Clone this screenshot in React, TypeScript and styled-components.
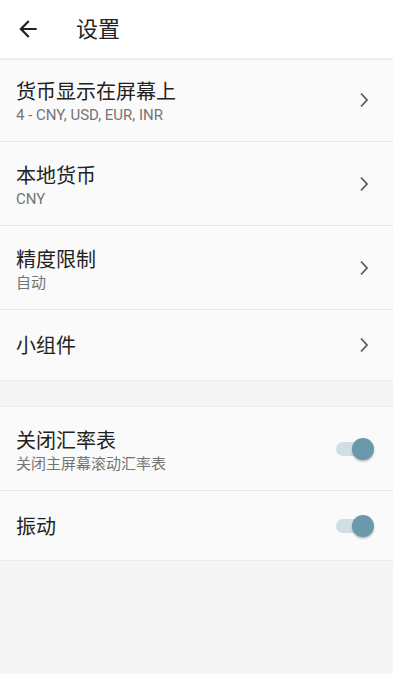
import React from "react";
import styled, { createGlobalStyle } from "styled-components";

const Global = createGlobalStyle`
  html, body { margin: 0; padding: 0; background: #f5f5f5; }
  body { font-family: Roboto, "Noto Sans CJK SC", "Noto Sans", sans-serif; }
  * { box-sizing: border-box; }
`;

const Page = styled.div`
  width: 393px;
  min-height: 674px;
  background: #f5f5f5;
  display: flex;
  flex-direction: column;
`;

const Header = styled.header`
  height: 58px;
  background: #ffffff;
  display: flex;
  align-items: center;
  padding-left: 15px;
  gap: 35px;
  position: relative;
  z-index: 1;
  box-shadow: 0 1px 3px rgba(0, 0, 0, 0.1);
`;

const Title = styled.h1`
  margin: 0 0 5px 0;
  font-size: 22px;
  font-weight: 400;
  color: #222;
  font-family: "Noto Sans CJK SC", sans-serif;
  line-height: 1;
`;

const Section = styled.section`
  background: #fafafa;
  display: flex;
  flex-direction: column;
  border-bottom: 1px solid #ececec;
`;

const Gap = styled.div`
  height: 26px;
  background: #f4f4f4;
  border-bottom: 1px solid #ebebeb;
`;

const Row = styled.div<{ $h: number; $last?: boolean }>`
  height: ${(p) => p.$h}px;
  display: flex;
  align-items: center;
  padding: 0 16px 0 16px;
  border-bottom: ${(p) => (p.$last ? "none" : "1px solid #e8e8e8")};
`;

const Texts = styled.div<{ $two?: boolean }>`
  flex: 1;
  display: flex;
  flex-direction: column;
  padding-top: ${(p) => (p.$two ? 3 : 0)}px;
`;

const RowTitle = styled.div`
  font-size: 20px;
  line-height: 28px;
  color: #222;
  font-family: "Noto Sans CJK SC", sans-serif;
`;

const RowSub = styled.div`
  font-size: 15px;
  line-height: 20px;
  color: #757575;
  font-family: Roboto, "Noto Sans CJK SC", sans-serif;
`;

const Chevron = styled.svg`
  width: 10px;
  height: 16px;
  margin-right: 8px;
`;

const Switch = styled.div`
  position: relative;
  width: 38px;
  height: 22px;
  margin-right: 3px;
`;

const Track = styled.div`
  position: absolute;
  left: 0;
  top: 4px;
  width: 34px;
  height: 14px;
  border-radius: 7px;
  background: #cfdfe4;
`;

const Knob = styled.div`
  position: absolute;
  right: 0;
  top: 0;
  width: 22px;
  height: 22px;
  border-radius: 50%;
  background: #6999aa;
  box-shadow: 0 1.5px 2px rgba(0, 0, 0, 0.28);
`;

const ChevronIcon = () => (
  <Chevron viewBox="0 0 10 16">
    <path d="M2 1.5 L8 8 L2 14.5" fill="none" stroke="#555" strokeWidth="1.7" />
  </Chevron>
);

const Toggle = () => (
  <Switch>
    <Track />
    <Knob />
  </Switch>
);

const BackIcon = () => (
  <svg width="26" height="26" viewBox="0 0 24 24">
    <path d="M20 11H7.83l5.59-5.59L12 4l-8 8 8 8 1.41-1.41L7.83 13H20v-2z" fill="#222" />
  </svg>
);

export default function App() {
  return (
    <Page>
      <Global />
      <Header>
        <BackIcon />
        <Title>设置</Title>
      </Header>
      <Section>
        <Row $h={84}>
          <Texts $two>
            <RowTitle>货币显示在屏幕上</RowTitle>
            <RowSub>4 - CNY, USD, EUR, INR</RowSub>
          </Texts>
          <ChevronIcon />
        </Row>
        <Row $h={84}>
          <Texts $two>
            <RowTitle>本地货币</RowTitle>
            <RowSub>CNY</RowSub>
          </Texts>
          <ChevronIcon />
        </Row>
        <Row $h={84}>
          <Texts $two>
            <RowTitle>精度限制</RowTitle>
            <RowSub>自动</RowSub>
          </Texts>
          <ChevronIcon />
        </Row>
        <Row $h={70} $last>
          <Texts>
            <RowTitle>小组件</RowTitle>
          </Texts>
          <ChevronIcon />
        </Row>
      </Section>
      <Gap />
      <Section>
        <Row $h={84}>
          <Texts $two>
            <RowTitle>关闭汇率表</RowTitle>
            <RowSub>关闭主屏幕滚动汇率表</RowSub>
          </Texts>
          <Toggle />
        </Row>
        <Row $h={69} $last>
          <Texts>
            <RowTitle>振动</RowTitle>
          </Texts>
          <Toggle />
        </Row>
      </Section>
    </Page>
  );
}
